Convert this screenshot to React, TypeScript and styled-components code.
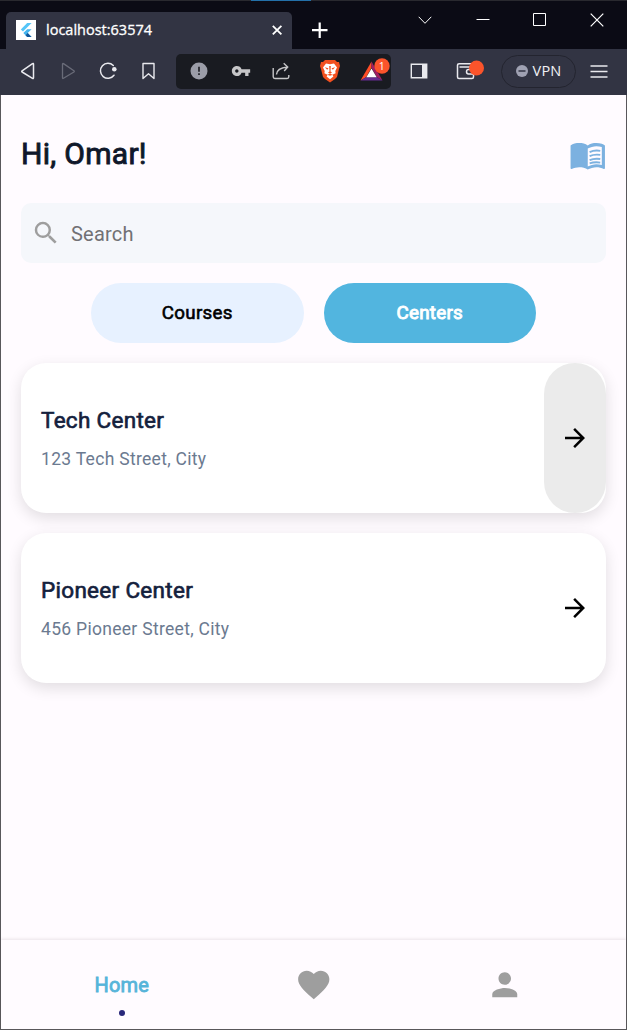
import React from "react";
import styled, { createGlobalStyle } from "styled-components";
import { MdArrowForward, MdFavorite, MdPerson, MdSearch, MdVpnKey } from "react-icons/md";

const GlobalStyle = createGlobalStyle`
  *, *::before, *::after { box-sizing: border-box; }
  body { margin: 0; background: #fffbff; }
  button { border: 0; padding: 0; margin: 0; font: inherit; background: none; }
  svg { display: block; flex: none; }
`;

const Window = styled.div`
  width: 627px;
  height: 1030px;
  display: flex;
  flex-direction: column;
  overflow: hidden;
  font-family: Roboto, "Liberation Sans", sans-serif;
  background: #fffbff;
`;

const TitleBar = styled.header`
  height: 49px;
  flex: none;
  display: flex;
  align-items: flex-end;
  padding-left: 6px;
  background: linear-gradient(90deg, #29292f 251px, #2370a9 251px, #2370a9 311px, #29292f 311px) top / 100% 1px no-repeat #0b0b15;
  color: #fff;
`;

const Tab = styled.div`
  width: 286px;
  height: 37px;
  display: flex;
  align-items: center;
  padding: 0 9px 1px 10px;
  border-radius: 5px 5px 0 0;
  background: #323443;
`;

const Favicon = styled.span`
  width: 20px;
  height: 20px;
  background: #fff;
`;

const TabTitle = styled.span`
  flex: 1;
  margin-left: 10px;
  font: 14.5px/20px "Open Sans", "Noto Sans", sans-serif;
  letter-spacing: 0;
  -webkit-text-stroke: 0.3px #fff;
  white-space: nowrap;
`;

const NewTab = styled.button`
  width: 20px;
  height: 37px;
  margin-left: 18px;
  color: #fff;
`;

const WindowControls = styled.div`
  display: flex;
  align-self: flex-start;
  margin: 10px 1px 0 auto;
`;

const ControlButton = styled.button`
  width: 57.3px;
  height: 20px;
  display: flex;
  align-items: center;
  justify-content: center;
  color: #fff;
`;

const Toolbar = styled.nav`
  height: 46px;
  flex: none;
  display: flex;
  align-items: center;
  padding: 0 0 2px 8px;
  background: #323443;
  color: #e9e9ee;
`;

const ToolButton = styled.button<{ $width?: number; $dim?: boolean }>`
  width: ${(p) => p.$width ?? 40}px;
  height: 32px;
  flex: none;
  display: flex;
  align-items: center;
  justify-content: center;
  color: ${(p) => (p.$dim ? "#696b78" : "inherit")};
`;

const AddressBar = styled.div`
  width: 215px;
  height: 35px;
  margin: 1px 0 0 8px;
  padding-bottom: 1px;
  flex: none;
  display: flex;
  align-items: center;
  border-radius: 5px;
  background: #191b21;
  color: #c6c6c8;
`;

const Divider = styled.span`
  width: 1px;
  height: 20px;
  margin-left: 4px;
  background: #b3b3b8;
`;

const VpnPill = styled.button`
  width: 75px;
  height: 33px;
  flex: none;
  margin: 0 0 0 8px;
  padding-bottom: 1px;
  display: flex;
  align-items: center;
  justify-content: center;
  gap: 5px;
  border: 1px solid #23242f;
  border-radius: 17px;
  font: 14.5px/20px "Open Sans", "Noto Sans", sans-serif;
  letter-spacing: 0.2px;
  color: #f1f1f4;
`;

const Page = styled.div`
  flex: 1;
  display: flex;
  flex-direction: column;
  border: solid #59575b;
  border-width: 0 1px 1px;
  background: #fffbff;
`;

const Main = styled.main`
  flex: 1;
  padding: 37.5px 20px 0;
`;

const Greeting = styled.div`
  height: 45px;
  display: flex;
  align-items: center;
  justify-content: space-between;
`;

const Heading = styled.h1`
  margin: 0 0 3px;
  font-size: 30px;
  line-height: 38px;
  font-weight: 400;
  letter-spacing: 0.3px;
  color: #0f172a;
  -webkit-text-stroke: 0.9px #0f172a;
`;

const BookIcon = styled.svg`
  margin-bottom: 1.5px;
  color: #7cb1e0;
`;

const SearchBox = styled.div`
  height: 60px;
  margin-top: 25px;
  display: flex;
  align-items: center;
  padding-left: 10px;
  border-radius: 10px;
  background: #f5f7fb;
  color: #9e9e9e;
`;

const Placeholder = styled.span`
  margin: 2px 0 0 10px;
  font-size: 20px;
  letter-spacing: 0.2px;
  color: #717174;
`;

const Switcher = styled.div`
  display: flex;
  justify-content: center;
  gap: 20px;
  margin-top: 20px;
`;

const Pill = styled.button<{ $active?: boolean }>`
  width: 212.5px;
  height: 60px;
  border-radius: 30px;
  font-size: 18.75px;
  letter-spacing: 0.3px;
  background: ${(p) => (p.$active ? "#52b5df" : "#e7f1ff")};
  color: ${(p) => (p.$active ? "#fff" : "#000")};
  -webkit-text-stroke: ${(p) => (p.$active ? 0.9 : 0.6)}px currentColor;
`;

const CardList = styled.section`
  display: flex;
  flex-direction: column;
  gap: 20px;
  margin-top: 20px;
`;

const Card = styled.article`
  height: 150px;
  display: flex;
  justify-content: space-between;
  border-radius: 25px;
  background: #fff;
  box-shadow: 0 5px 15px rgba(0, 0, 0, 0.12);
`;

const CardText = styled.div`
  padding: 42px 0 0 20px;
`;

const CardTitle = styled.h2`
  margin: 0;
  font-size: 22.5px;
  line-height: 30px;
  font-weight: 400;
  letter-spacing: 0.3px;
  color: #14213d;
  -webkit-text-stroke: 0.65px #14213d;
`;

const CardAddress = styled.p`
  margin: 12px 0 0;
  font-size: 17.5px;
  line-height: 24px;
  letter-spacing: 0.3px;
  color: #6b7a90;
`;

const OpenButton = styled.button<{ $hovered?: boolean }>`
  width: 62.5px;
  height: 150px;
  display: flex;
  align-items: center;
  justify-content: center;
  border-radius: 31.25px;
  background: ${(p) => (p.$hovered ? "#ebebeb" : "transparent")};
  color: #000;
`;

const BottomNav = styled.nav`
  height: 89px;
  display: flex;
  padding: 0 25px;
  box-shadow: 0 -1px 3px rgba(90, 60, 80, 0.13);
  color: #9e9e9e;
`;

const NavItem = styled.a<{ $active?: boolean }>`
  flex: 1;
  display: flex;
  flex-direction: column;
  align-items: center;
  padding-top: ${(p) => (p.$active ? 33 : 26.2)}px;
  font-size: 20px;
  line-height: 24px;
  letter-spacing: 0.2px;
  color: ${(p) => (p.$active ? "#56b4d9" : "inherit")};
  -webkit-text-stroke: 0.8px currentColor;
  svg { stroke-width: 0; }
`;

const Dot = styled.span`
  width: 6px;
  height: 6px;
  margin-top: 13px;
  border-radius: 50%;
  background: #29277a;
`;

const FlutterLogo = () => (
  <svg width="20" height="20" viewBox="0 0 20 20">
    <path d="M11.2 3h4.4L7 11.6 4.8 9.4z" fill="#54c5f8" />
    <path d="M11.2 9.3h4.4l-3.9 3.8 3.9 3.9h-4.4l-3.9-3.9z" fill="#45b4ee" />
    <path d="M9.5 15.3l2.2-2.2 3.9 3.9h-4.4z" fill="#11579b" />
  </svg>
);

const BraveLogo = () => (
  <svg width="22" height="24" viewBox="0 0 22 24">
    <path d="M6 1h10l2 2h2l1 4-1 3-2 8-2 2-5 3.5L6 20l-2-2-2-8-1-3 1-4h2z" fill="#f2501f" />
    <path d="M7 4.500l4 .7 4-.7 3 4-1.700 3.500.3 2.300-3.200 1.500 1 1.700-3.400 2.700-3.400-2.700 1-1.700-3.200-1.500.3-2.300L4 8.500z" fill="#fff" />
    <path d="M5.800 8.300l3.700.9-1.300 1.600zM16.200 8.300l-3.700.9 1.300 1.600zM10.200 7h1.600l-.3 5.500 1.500 1.100-2 1.100-2-1.100 1.500-1.100zM8.200 15.800l2.800-1 2.800 1-2.800 1z" fill="#f2501f" />
  </svg>
);

const RewardsLogo = () => (
  <svg width="32" height="26" viewBox="0 0 32 26">
    <path d="M12.500 3.500L1.500 22.500l5.500-3.200 5.500-9.500z" fill="#ff4d27" />
    <path d="M12.500 3.500l11 19-5.500-3.200-5.500-9.500z" fill="#9e1f63" />
    <path d="M1.500 22.500h22L18 19.200H7z" fill="#662d91" />
    <path d="M12.500 10.500l5.200 8.800H7.300z" fill="#fff" />
    <circle cx="23" cy="8" r="7.700" fill="#fb542b" />
    <text x="22.800" y="12" fontSize="10.500" fill="#fff" textAnchor="middle" fontFamily="Open Sans, sans-serif">1</text>
  </svg>
);

const OpenBook = () => (
  <BookIcon width="37.5" height="37.5" viewBox="0 0 24 24" fill="currentColor">
    <path
      fillRule="evenodd"
      d="M21 5c-1.110-.35-2.330-.5-3.500-.5-1.950 0-4.050.4-5.500 1.500-1.450-1.100-3.550-1.500-5.500-1.500S2.450 4.900 1 6v14.650c0 .25.25.5.5.5.1 0 .15-.05.25-.05C3.100 20.450 5.050 20 6.500 20c1.950 0 4.050.4 5.500 1.500 1.350-.85 3.800-1.500 5.500-1.500 1.650 0 3.350.3 4.750 1.050.1.050.15.050.25.050.25 0 .5-.25.5-.5V6c-.6-.45-1.250-.75-2-1zm0 13.500c-1.100-.35-2.300-.5-3.500-.5-1.700 0-4.150.65-5.500 1.500V8c1.350-.85 3.800-1.500 5.500-1.500 1.200 0 2.400.15 3.500.5v11.500z"
    />
    <path
      d="M13.200 10.300q3-1.400 6.800-.8M13.200 12.900q3-1.400 6.800-.8M13.200 15.500q3-1.400 6.800-.8M13.200 17.500q3-1 6.800-.5"
      fill="none"
      stroke="currentColor"
      strokeWidth="1.200"
    />
  </BookIcon>
);

const centers = [
  { name: "Tech Center", address: "123 Tech Street, City", hovered: true },
  { name: "Pioneer Center", address: "456 Pioneer Street, City", hovered: false },
];

const line = { fill: "none", stroke: "currentColor" };

export default function App() {
  return (
    <Window>
      <GlobalStyle />
      <TitleBar>
        <Tab>
          <Favicon><FlutterLogo /></Favicon>
          <TabTitle>localhost:63574</TabTitle>
          <svg width="12" height="12" viewBox="0 0 12 12" {...line} strokeWidth="1.800"><path d="M1.800 1.800l8.600 8.600M10.400 1.800l-8.600 8.600" /></svg>
        </Tab>
        <NewTab aria-label="New tab">
          <svg width="20" height="37" viewBox="0 0 20 37" {...line} strokeWidth="2.200"><path d="M2 18.200h15.500M9.700 10.500V26" /></svg>
        </NewTab>
        <WindowControls>
          <ControlButton aria-label="Search tabs"><svg width="14" height="14" viewBox="0 0 14 14" {...line} strokeWidth="1"><path d="M.7 3.800L7 10.300l6.300-6.500" /></svg></ControlButton>
          <ControlButton aria-label="Minimize"><svg width="14" height="14" viewBox="0 0 14 14" {...line}><path d="M.5 6.500h13" /></svg></ControlButton>
          <ControlButton aria-label="Maximize"><svg width="14" height="14" viewBox="0 0 14 14" {...line}><path d="M.5.5h12v12H.5z" /></svg></ControlButton>
          <ControlButton aria-label="Close"><svg width="14" height="14" viewBox="0 0 14 14" {...line} strokeWidth="1.200"><path d="M.7.7l12.600 12.600M13.300.7L.7 13.300" /></svg></ControlButton>
        </WindowControls>
      </TitleBar>
      <Toolbar>
        <ToolButton aria-label="Back">
          <svg width="20" height="20" viewBox="0 0 20 20" {...line} strokeWidth="1.500" strokeLinejoin="round"><path d="M15.500 3.200v13.600q0 1.100-1 .5L4.100 11q-.8-.6 0-1.200L14.500 2.600q1-.6 1 .6z" /></svg>
        </ToolButton>
        <ToolButton $dim aria-label="Forward">
          <svg width="20" height="20" viewBox="0 0 20 20" {...line} strokeWidth="1.300" strokeLinejoin="round"><path d="M4.500 3.200v13.600q0 1.100 1 .5L15.900 11q.8-.6 0-1.200L5.500 2.600q-1-.6-1 .6z" /></svg>
        </ToolButton>
        <ToolButton aria-label="Reload">
          <svg width="20" height="20" viewBox="0 0 20 20" {...line} strokeWidth="1.500"><path d="M15.300 4.500A7.500 7.500 0 1 0 16 14.200" strokeLinecap="round" /><circle cx="16.300" cy="8.300" r="2.300" fill="currentColor" stroke="none" /></svg>
        </ToolButton>
        <ToolButton aria-label="Bookmark">
          <svg width="20" height="20" viewBox="0 0 20 20" {...line} strokeWidth="1.400" strokeLinejoin="round"><path d="M5 2.500h11v15L10.500 12.700 5 17.500z" /></svg>
        </ToolButton>
        <AddressBar>
          <ToolButton $width={45}>
            <svg width="18" height="18" viewBox="0 0 18 18"><circle cx="9" cy="9" r="8.500" fill="#9b9da8" /><path d="M9 4.800v5M9 11.300v1.700" stroke="#191b21" strokeWidth="1.600" /></svg>
          </ToolButton>
          <ToolButton><MdVpnKey size={20} /></ToolButton>
          <ToolButton>
            <svg width="18" height="18" viewBox="0 0 18 18" {...line} strokeWidth="1.400"><path d="M1.200 6v8.800q0 1.700 1.700 1.700h12.200q1.700 0 1.700-1.700V13M4.500 12.500Q4.800 6 15.500 5M11.700 1.200l4 3.800-3.500 4" /></svg>
          </ToolButton>
          <Divider />
          <ToolButton $width={50}><BraveLogo /></ToolButton>
          <ToolButton $width={40}><RewardsLogo /></ToolButton>
        </AddressBar>
        <ToolButton $width={55} aria-label="Sidebar">
          <svg width="18" height="18" viewBox="0 0 18 18"><path d="M1.300 2.300h15.400v13.400H1.300z" fill="none" stroke="currentColor" strokeWidth="1.400" /><path d="M12 2h5v14h-5z" fill="currentColor" /></svg>
        </ToolButton>
        <ToolButton $width={47} aria-label="Wallet">
          <svg width="28" height="24" viewBox="0 0 28 24" {...line} strokeWidth="1.500">
            <path d="M17 7V4.800H3.300Q1.500 4.800 1.500 6.500V18q0 1.500 1.500 1.500h13q1.500 0 1.500-1.500V8H3.500M18 10.500h-5.500q-2 0-2 2.200t2 2.200H18" />
            <circle cx="20.500" cy="9" r="7.500" fill="#fb542b" stroke="none" />
          </svg>
        </ToolButton>
        <VpnPill>
          <svg width="12" height="12" viewBox="0 0 12 12"><circle cx="6" cy="6" r="6" fill="#9fa1b2" /><path d="M2.500 6h7" stroke="#323443" strokeWidth="1.500" /></svg>
          VPN
        </VpnPill>
        <ToolButton $width={45} aria-label="Menu">
          <svg width="18" height="18" viewBox="0 0 18 18" {...line} strokeWidth="1.500"><path d="M.5 4h17M.5 9.500h17M.5 15h17" /></svg>
        </ToolButton>
      </Toolbar>
      <Page>
        <Main>
          <Greeting>
            <Heading>Hi, Omar!</Heading>
            <OpenBook />
          </Greeting>
          <SearchBox>
            <MdSearch size={30} />
            <Placeholder>Search</Placeholder>
          </SearchBox>
          <Switcher>
            <Pill>Courses</Pill>
            <Pill $active>Centers</Pill>
          </Switcher>
          <CardList>
            {centers.map((c) => (
              <Card key={c.name}>
                <CardText>
                  <CardTitle>{c.name}</CardTitle>
                  <CardAddress>{c.address}</CardAddress>
                </CardText>
                <OpenButton $hovered={c.hovered} aria-label={`Open ${c.name}`}>
                  <MdArrowForward size={30} />
                </OpenButton>
              </Card>
            ))}
          </CardList>
        </Main>
        <BottomNav>
          <NavItem $active>Home<Dot /></NavItem>
          <NavItem><MdFavorite size={37.5} /></NavItem>
          <NavItem><MdPerson size={37.5} /></NavItem>
        </BottomNav>
      </Page>
    </Window>
  );
}
